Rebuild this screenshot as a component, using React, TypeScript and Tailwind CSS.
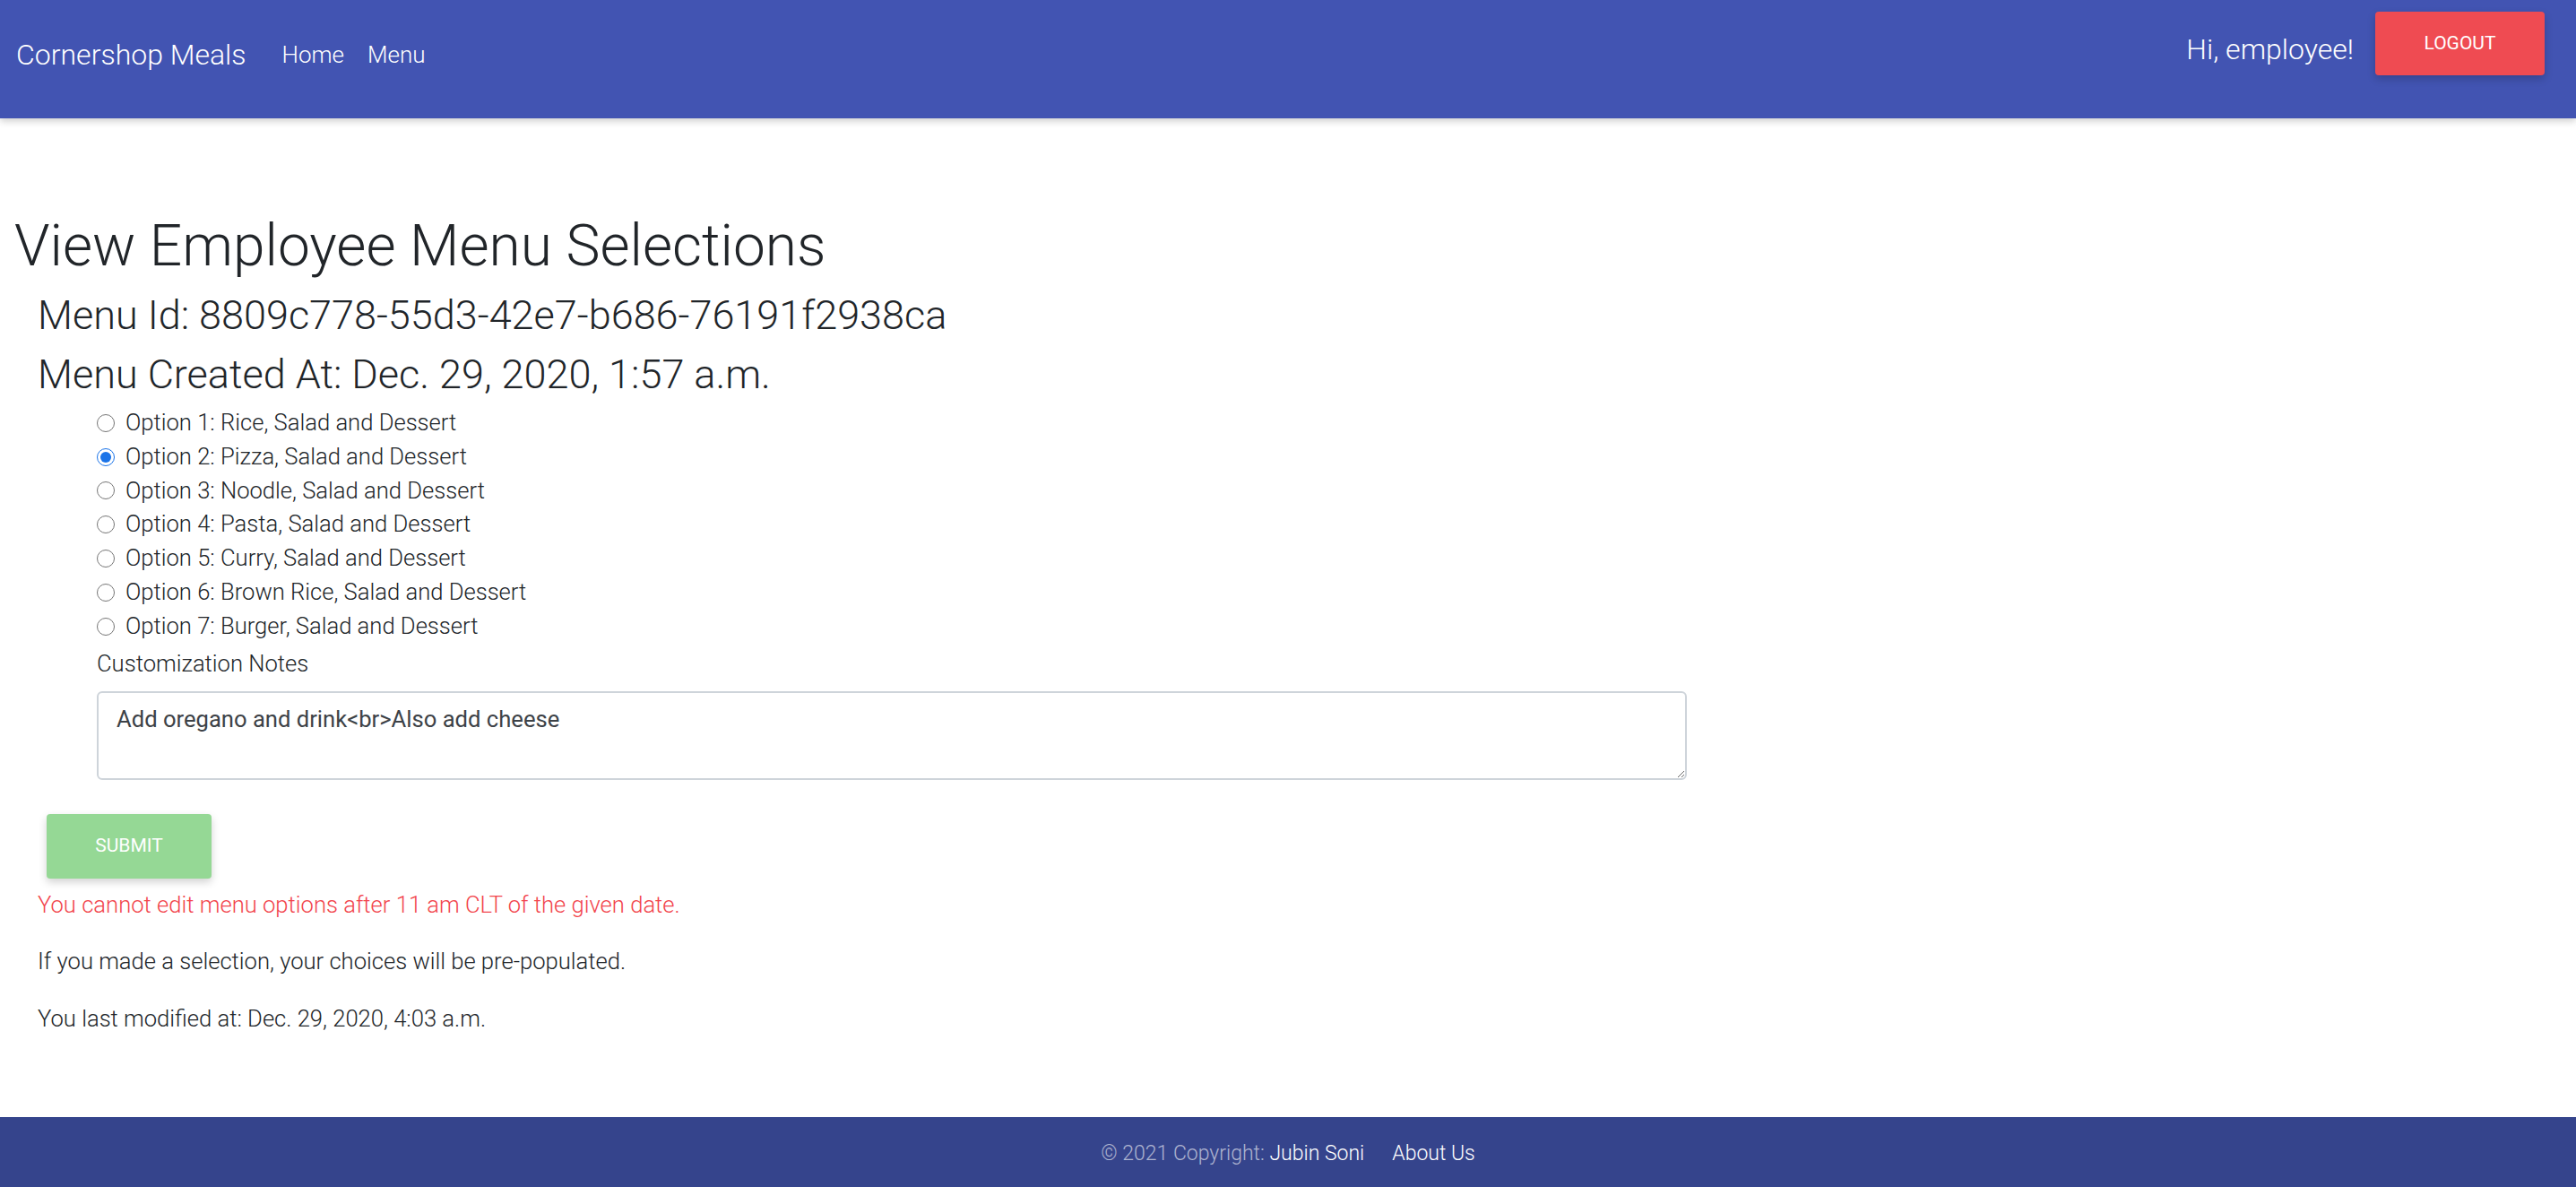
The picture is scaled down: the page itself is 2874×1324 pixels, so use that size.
import React from 'react';

const options = [
    'Option 1: Rice, Salad and Dessert',
    'Option 2: Pizza, Salad and Dessert',
    'Option 3: Noodle, Salad and Dessert',
    'Option 4: Pasta, Salad and Dessert',
    'Option 5: Curry, Salad and Dessert',
    'Option 6: Brown Rice, Salad and Dessert',
    'Option 7: Burger, Salad and Dessert',
];

export default function App() {
    return (
        <div className="min-h-screen flex flex-col bg-white text-[#212529] font-['Roboto',sans-serif] font-light">
            {/* Navbar */}
            <nav className="h-[132px] bg-[#4254b2] flex items-start justify-between pl-[18px] pr-[35px] shadow-[0_3px_8px_rgba(0,0,0,0.2)] relative z-10">
                <div className="flex items-center h-[122px] gap-[40px] text-white">
                    <span className="text-[32px]">Cornershop Meals</span>
                    <div className="flex items-center gap-[26px] text-[26px]">
                        <a href="#">Home</a>
                        <a href="#">Menu</a>
                    </div>
                </div>
                <div className="flex items-start gap-[24px] pt-[13px]">
                    <span className="text-white text-[32px] leading-[84px]">Hi, employee!</span>
                    <button className="w-[189px] h-[71px] rounded-[4px] bg-[#ef4b52] text-white text-[21px] font-normal uppercase shadow-[0_4px_10px_rgba(0,0,0,0.2)]">
                        Logout
                    </button>
                </div>
            </nav>

            {/* Main */}
            <main className="flex-1 px-[16px] pt-[95px] pb-[40px]">
                <h1 className="text-[64px] leading-[96px] font-light">View Employee Menu Selections</h1>
                <div className="px-[26px]">
                    <h4 className="text-[45px] leading-[66px] -mt-[4px] font-light">Menu Id: 8809c778-55d3-42e7-b686-76191f2938ca</h4>
                    <h4 className="text-[45px] leading-[66px] font-light">Menu Created At: Dec. 29, 2020, 1:57 a.m.</h4>

                    <div className="pl-[66px] mt-[2px]">
                        {options.map((opt, i) => (
                            <label key={opt} className="flex items-center gap-[12px] text-[25.6px] leading-[37.8px]">
                                <input
                                    type="radio"
                                    name="option"
                                    defaultChecked={i === 1}
                                    className="m-0 w-[20px] h-[20px] accent-[#1a73e8]"
                                />
                                <span>{opt}</span>
                            </label>
                        ))}
                    </div>

                    <div className="pl-[66px] mt-[3px]">
                        <label className="block text-[25.6px] leading-[38px]">Customization Notes</label>
                        <textarea
                            defaultValue="Add oregano and drink<br>Also add cheese"
                            className="mt-[12px] block w-[1774px] h-[99px] border-2 border-[#ced4da] rounded-[6px] px-[20px] py-[10px] text-[25.6px] font-normal text-[#3d4247] font-['Roboto',sans-serif]"
                        />
                    </div>

                    <button className="mt-[38px] ml-[10px] w-[184px] h-[72px] rounded-[4px] bg-[#95d895] text-white text-[21px] font-normal uppercase shadow-[0_4px_10px_rgba(0,0,0,0.18)]">
                        Submit
                    </button>

                    <p className="mt-[8px] text-[25.6px] leading-[42px] text-[#f2444c]">
                        You cannot edit menu options after 11 am CLT of the given date.
                    </p>
                    <p className="mt-[21px] text-[25.6px] leading-[42px]">If you made a selection, your choices will be pre-populated.</p>
                    <p className="mt-[22px] text-[25.6px] leading-[42px]">You last modified at: Dec. 29, 2020, 4:03 a.m.</p>
                </div>
            </main>

            {/* Footer */}
            <footer className="h-[78px] pt-[5px] bg-[#35448c] flex items-center justify-center gap-[31px] text-[23px]">
                <span className="text-white/60">
                    © 2021 Copyright: <a href="#" className="text-white">Jubin Soni</a>
                </span>
                <a href="#" className="text-white">About Us</a>
            </footer>
        </div>
    );
}
